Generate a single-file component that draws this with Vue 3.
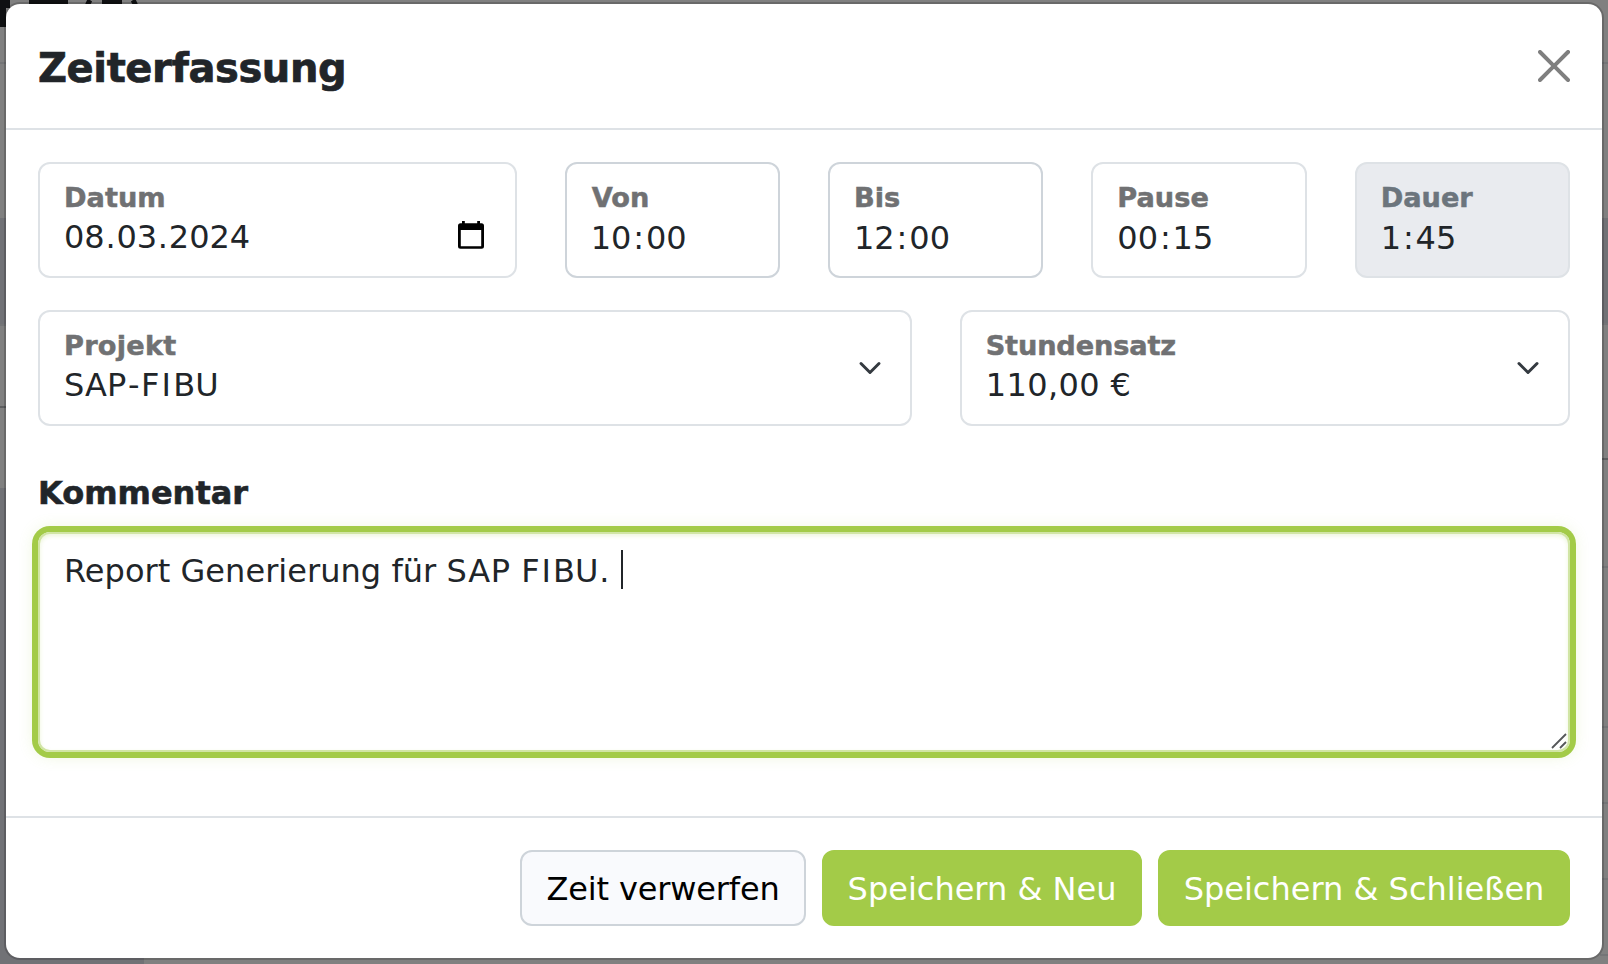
<script setup>
const timeFields = [
  { id: 'von', label: 'Von', value: '10:00', tone: 'strong' },
  { id: 'bis', label: 'Bis', value: '12:00', tone: 'strong' },
  { id: 'pause', label: 'Pause', value: '00:15', tone: '' },
  { id: 'dauer', label: 'Dauer', value: '1:45', tone: 'disabled' },
]
const selects = [
  { id: 'projekt', label: 'Projekt', value: 'SAP-FIBU' },
  { id: 'satz', label: 'Stundensatz', value: '110,00 €' },
]
// Narrow characters get extra side space, so split them from the rest.
const runs = (text) => text.split(/([:.\-I])/).filter(Boolean)
const runClass = (run) => ({ ':': 'colon', '.': 'dot', '-': 'dash', I: 'cap-i' })[run]
</script>

<template>
  <div class="page">
    <svg class="underlay" width="1608" height="964" viewBox="0 0 1608 964" aria-hidden="true">
      <path fill="#0f1012" d="M0 0h10v8h-4v19H0zM29 0h39v8H29zM102 0h20v8h-20z" />
      <path fill="none" stroke="#0f1012" stroke-width="5" d="M90 0q-2 3-3 7M133 0q2 3 3 7" />
      <path fill="#717276" d="M0 218h10v108H0zM0 488h10v476H0zM0 956h144v8H0zM1600 218h8v106h-8z" />
      <path stroke="#747577" stroke-width="2" d="M0 63h8M1600 63h8M0 325h8M1600 324h8M1600 567h8M1600 727h8M1600 803h8M1600 879h8M1600 955h8" />
      <path stroke="#5d5e60" stroke-width="2" d="M0 407h8M1600 459h8" />
    </svg>

    <section class="modal" role="dialog">
      <header class="head">
        <h1 class="title">Zeiterfassung</h1>
        <svg class="close" viewBox="0 0 16 16" aria-label="Schließen">
          <path d="M.293.293a1 1 0 0 1 1.414 0L8 6.586 14.293.293a1 1 0 1 1 1.414 1.414L9.414 8l6.293 6.293a1 1 0 0 1-1.414 1.414L8 9.414l-6.293 6.293a1 1 0 0 1-1.414-1.414L6.586 8 .293 1.707a1 1 0 0 1 0-1.414z" />
        </svg>
      </header>

      <div class="body">
        <div class="row row-time">
          <div class="field">
            <span class="label datum">Datum</span>
            <span class="value"><span v-for="(r, i) in runs('08.03.2024')" :key="i" :class="runClass(r)">{{ r }}</span></span>
            <svg class="calendar" width="26" height="28" viewBox="0 0 26 28">
              <path fill-rule="evenodd" d="M4 0H6.800V2.300H19.200V0H22v2.300h1.500a2.500 2.500 0 0 1 2.500 2.500v20.400a2.500 2.500 0 0 1-2.500 2.500h-21A2.500 2.500 0 0 1 0 25.200V4.800a2.500 2.500 0 0 1 2.500-2.500H4zM2.800 9v16.200h20.400V9z" />
            </svg>
          </div>
          <div v-for="f in timeFields" :key="f.id" class="field time" :class="f.tone">
            <span class="label" :class="f.id">{{ f.label }}</span>
            <span class="value"><span v-for="(r, i) in runs(f.value)" :key="i" :class="runClass(r)">{{ r }}</span></span>
          </div>
        </div>

        <div class="row row-select">
          <div v-for="s in selects" :key="s.id" class="field">
            <span class="label" :class="s.id">{{ s.label }}</span>
            <span class="value" :class="'v-' + s.id"><span v-for="(r, i) in runs(s.value)" :key="i" :class="runClass(r)">{{ r }}</span></span>
            <svg class="chevron" width="24" height="24" viewBox="0 0 16 16">
              <path d="m2 5 6 6 6-6" />
            </svg>
          </div>
        </div>

        <div class="caption">Kommentar</div>
        <div class="comment">
          <span class="comment-text">Report Generierung für <span class="sap">SAP</span> F<span class="cap-i">I</span>BU<span class="dot">.</span></span><i class="caret"></i>
          <svg class="grip" width="16" height="16" viewBox="0 0 16 16">
            <path d="M1 15 15 1M9 15l6-6" />
          </svg>
        </div>
      </div>

      <footer class="foot">
        <button class="btn light">Zeit verwerfen</button>
        <button class="btn neu">Speichern &amp; Neu</button>
        <button class="btn zu">Speichern &amp; Schließen</button>
      </footer>
    </section>
  </div>
</template>

<style>
body {
  margin: 0;
  background: #808080;
}
</style>

<style scoped>
.page {
  position: relative;
  box-sizing: border-box;
  width: 1608px;
  height: 964px;
  padding: 2px 4px;
  overflow: hidden;
  background: #808080;
  font-family: Verdana, "DejaVu Sans", sans-serif;
  font-size: 32px;
  color: #212529;
}
.underlay {
  position: absolute;
  top: 0;
  left: 0;
}
.modal {
  position: relative;
  display: flex;
  flex-direction: column;
  box-sizing: border-box;
  height: 958px;
  border: 2px solid rgba(0, 0, 0, 0.175);
  border-radius: 16px;
  background: #fff;
  background-clip: padding-box;
}
.head {
  display: flex;
  justify-content: space-between;
  align-items: center;
  box-sizing: border-box;
  height: 126px;
  padding: 0 32px;
  border-bottom: 2px solid #dee2e6;
}
.title {
  margin: 4px 0 0;
  font-size: 40px;
  line-height: 60px;
  font-weight: 700;
  letter-spacing: -0.4px;
  -webkit-text-stroke: 0.7px currentColor;
}
.close {
  width: 32px;
  height: 32px;
  fill: #7f7f7f;
}
.body {
  flex: 1;
  padding: 32px 32px 0;
}
.row {
  display: grid;
  gap: 48px;
  margin-bottom: 32px;
}
.row-time {
  grid-template-columns: 478.67px repeat(4, 1fr);
}
.row-select {
  grid-template-columns: 873.67px 1fr;
}
.field {
  position: relative;
  display: flex;
  flex-direction: column;
  box-sizing: border-box;
  height: 116px;
  padding: 18px 24px 0;
  border: 2px solid #dee2e6;
  border-radius: 12px;
  white-space: nowrap;
}
.field.strong {
  border-color: #ced4da;
}
.field.disabled {
  background: #e9ebef;
}
.label {
  font-size: 27.2px;
  line-height: 32px;
  font-weight: 700;
  color: #707173;
  -webkit-text-stroke: 0.5px currentColor;
}
.label.von {
  padding-left: 1px;
}
.label.projekt {
  letter-spacing: 0.25px;
}
.label.satz {
  letter-spacing: -0.15px;
}
.disabled .label {
  color: #6c757d;
}
.value {
  margin-top: 3px;
  line-height: 40px;
}
.time .value {
  margin-top: 4px;
}
.colon {
  padding: 0 1.9px;
}
.dot {
  padding: 0 0.75px;
}
.dash {
  padding: 0 1.5px;
}
.cap-i {
  padding: 0 2px;
}
.v-projekt {
  letter-spacing: 0.1px;
}
.v-satz {
  letter-spacing: 0.4px;
}
.calendar {
  position: absolute;
  right: 31px;
  top: 57px;
}
.chevron {
  position: absolute;
  right: 28px;
  top: 44px;
  fill: none;
  stroke: #343a40;
  stroke-width: 2;
  stroke-linecap: round;
  stroke-linejoin: round;
}
.caption {
  margin-top: 47px;
  height: 59px;
  line-height: 40px;
  font-weight: 700;
  -webkit-text-stroke: 0.6px currentColor;
}
.comment {
  position: relative;
  display: flex;
  align-items: flex-start;
  box-sizing: border-box;
  height: 220px;
  padding: 16px 24px;
  border: 2px solid #d1e5a5;
  border-radius: 12px;
  box-shadow: inset 0 2px 4px rgba(163, 203, 72, 0.2), 0 0 0 6px #a3cb48, 0 0 16px 4px rgba(163, 203, 72, 0.2);
}
.comment-text {
  line-height: 40px;
  margin-top: 1px;
  letter-spacing: 0.04px;
  white-space: nowrap;
}
.sap {
  letter-spacing: 0.8px;
}
.caret {
  position: absolute;
  left: 581px;
  top: 16px;
  width: 2px;
  height: 39px;
  background: #212529;
}
.grip {
  position: absolute;
  right: 1px;
  bottom: 1px;
  fill: none;
  stroke: #555759;
  stroke-width: 1.8;
}
.foot {
  display: flex;
  justify-content: flex-end;
  gap: 16px;
  box-sizing: border-box;
  height: 142px;
  padding: 32px;
  border-top: 2px solid #dee2e6;
}
.btn {
  box-sizing: border-box;
  height: 76px;
  padding: 2px 0 0;
  border: 2px solid #a3cb48;
  border-radius: 12px;
  background: #a3cb48;
  color: #fff;
  font-family: inherit;
  font-size: 32px;
  line-height: 48px;
  white-space: nowrap;
}
.btn.light {
  width: 286px;
  border-color: #ced4da;
  background: #f9fafd;
  color: #000;
  letter-spacing: -0.15px;
}
.btn.neu {
  width: 320px;
}
.btn.zu {
  width: 412px;
}
</style>
